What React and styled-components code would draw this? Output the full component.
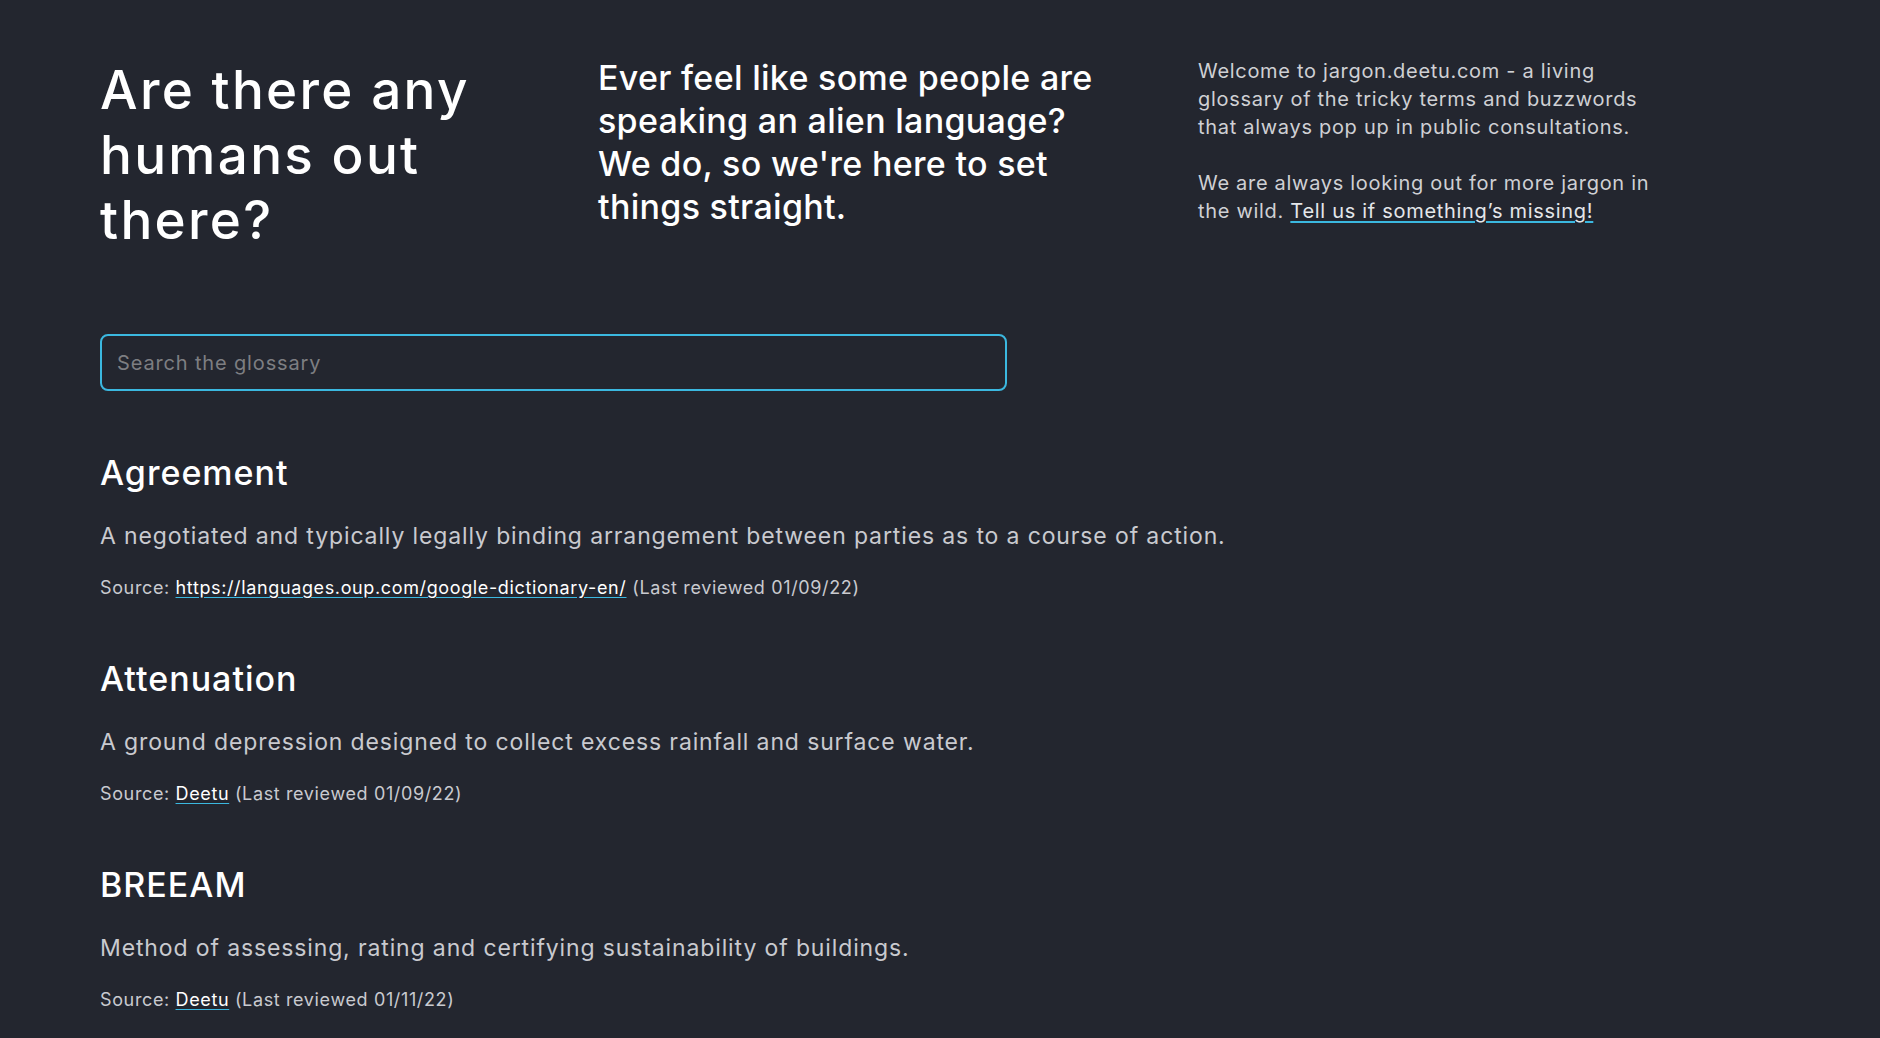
import React from "react";
import styled, { createGlobalStyle } from "styled-components";

const Global = createGlobalStyle`
  html, body { margin: 0; padding: 0; background: #23262f; }
  body { font-family: Inter, "Open Sans", sans-serif; color: #fff; }
  * { box-sizing: border-box; }
`;

const Page = styled.div`
  min-height: 1038px;
  background: #23262f;
  padding: 50px 100px 40px;
`;

const Intro = styled.header`
  display: grid;
  grid-template-columns: 498px 600px 1fr;
  align-items: start;
`;

const Title = styled.h1`
  margin: 0;
  padding-top: 8px;
  font-size: 53px;
  line-height: 65px;
  letter-spacing: 2.3px;
  font-weight: 500;
  color: #fff;
`;

const Lead = styled.p`
  margin: 0;
  padding-top: 6px;
  font-size: 34px;
  line-height: 43px;
  letter-spacing: 0.3px;
  font-weight: 500;
  color: #fff;
`;

const About = styled.div`
  padding-top: 7px;
  font-size: 20px;
  line-height: 28px;
  letter-spacing: 0.7px;
  color: #cfd0d4;
  p { margin: 0 0 28px; }
`;

const Link = styled.a`
  color: ${(p) => (p.$light ? "#e4e6ea" : "#fff")};
  text-decoration: underline;
  text-decoration-color: #3bb8e0;
  text-underline-offset: 3px;
  cursor: pointer;
`;

const Search = styled.input`
  display: block;
  margin-top: 81px;
  width: 907px;
  height: 57px;
  padding: 0 15px;
  border: 2px solid #3bb8e0;
  border-radius: 8px;
  background: transparent;
  color: #fff;
  font-family: inherit;
  font-size: 20px;
  letter-spacing: 0.85px;
  outline: none;
  &::placeholder { color: #7d7e82; }
`;

const List = styled.div`
  margin-top: 60px;
  display: flex;
  flex-direction: column;
  gap: 57px;
`;

const Entry = styled.section``;

const Term = styled.h2`
  margin: 0;
  font-size: 34px;
  line-height: 44px;
  letter-spacing: 1px;
  font-weight: 500;
  color: #fff;
`;

const Definition = styled.p`
  margin: 25px 0 0;
  font-size: 23px;
  line-height: 32px;
  letter-spacing: 0.87px;
  color: #c9cacf;
`;

const Source = styled.p`
  margin: 24px 0 0;
  font-size: 18px;
  line-height: 24px;
  letter-spacing: 0.63px;
  color: #c9cacf;
`;

const entries = [
  {
    term: "Agreement",
    def: "A negotiated and typically legally binding arrangement between parties as to a course of action.",
    src: "https://languages.oup.com/google-dictionary-en/",
    date: "01/09/22",
  },
  {
    term: "Attenuation",
    def: "A ground depression designed to collect excess rainfall and surface water.",
    src: "Deetu",
    date: "01/09/22",
  },
  {
    term: "BREEAM",
    def: "Method of assessing, rating and certifying sustainability of buildings.",
    src: "Deetu",
    date: "01/11/22",
  },
];

export default function App() {
  return (
    <>
      <Global />
      <Page>
        <Intro>
          <Title>
            Are there any
            <br />
            humans out
            <br />
            there?
          </Title>
          <Lead>
            Ever feel like some people are
            <br />
            speaking an alien language?
            <br />
            We do, so we're here to set
            <br />
            things straight.
          </Lead>
          <About>
            <p>
              Welcome to jargon.deetu.com - a living
              <br />
              glossary of the tricky terms and buzzwords
              <br />
              that always pop up in public consultations.
            </p>
            <p>
              We are always looking out for more jargon in
              <br />
              the wild. <Link $light>Tell us if something’s missing!</Link>
            </p>
          </About>
        </Intro>
        <Search placeholder="Search the glossary" />
        <List>
          {entries.map((e) => (
            <Entry key={e.term}>
              <Term>{e.term}</Term>
              <Definition>{e.def}</Definition>
              <Source>
                Source: <Link>{e.src}</Link> (Last reviewed {e.date})
              </Source>
            </Entry>
          ))}
        </List>
      </Page>
    </>
  );
}
